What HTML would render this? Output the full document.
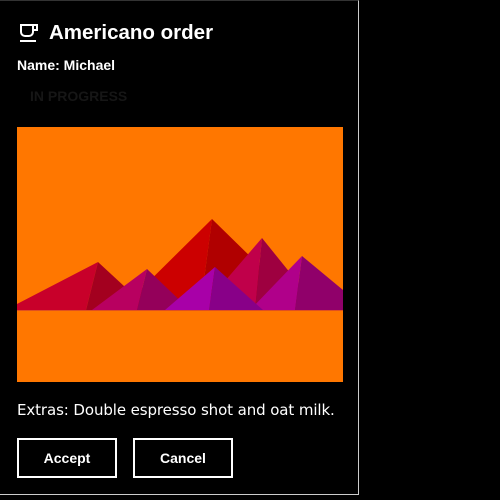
<!DOCTYPE html>
<html><head><style>
body{margin:0;background:#000;width:500px;height:500px;overflow:hidden;font-family:"DejaVu Sans","Liberation Sans",sans-serif;color:#fff}
.card{position:absolute;left:0;top:0;width:358px;height:493px;border:1px solid #ccc;border-left:none;border-top:1px solid #333}
h1{position:absolute;left:49px;top:21px;margin:0;font-size:20.5px;font-weight:bold;font-family:"Liberation Sans",sans-serif}
.name{position:absolute;left:17px;top:57px;font-size:14px;font-weight:bold;font-family:"Liberation Sans",sans-serif}
.st{position:absolute;left:30px;top:88px;font-size:14px;font-weight:bold;color:#161616;font-family:"Liberation Sans",sans-serif}
.img{position:absolute;left:17px;top:127px}
.ex{position:absolute;left:17px;top:401px;font-size:15px;letter-spacing:-0.1px}
.btn{position:absolute;top:438px;width:100px;height:40px;border:2px solid #fff;box-sizing:border-box;font-size:14px;font-weight:bold;text-align:center;line-height:36px;font-family:"Liberation Sans",sans-serif}
</style></head><body>
<div class="card"></div>
<svg style="position:absolute;left:19px;top:23px" width="22" height="20" viewBox="0 0 22 20" fill="none" stroke="#fff" stroke-width="2"><path d="M2 2h12v7a4 4 0 0 1-4 4H6a4 4 0 0 1-4-4z"/><path d="M14 2h4v5h-4"/><path d="M1 18h16"/></svg>
<h1>Americano order</h1>
<div class="name">Name: Michael</div>
<div class="st">IN PROGRESS</div>
<svg class="img" width="326" height="255" viewBox="17 127 326 255">
<rect x="17" y="127" width="326" height="255" fill="#ff7700"/>
<polygon points="17,304 98,262 86,310 17,310" fill="#c8002a"/><polygon points="98,262 150,310 86,310" fill="#a3001f"/>
<polygon points="120,310 212,219 200,310" fill="#cc0000"/><polygon points="212,219 305,310 200,310" fill="#b00000"/>
<polygon points="200,310 262,238 255,310" fill="#c0004a"/><polygon points="262,238 320,310 255,310" fill="#9e0040"/>
<polygon points="92,310 147,269 137,310" fill="#b80060"/><polygon points="147,269 190,310 137,310" fill="#94005a"/>
<polygon points="250,310 302,256 295,310" fill="#b0008a"/><polygon points="302,256 343,290 343,310 295,310" fill="#90006a"/>
<polygon points="165,310 215,267 209,310" fill="#a800a8"/><polygon points="215,267 263,310 209,310" fill="#880088"/>
<rect x="17" y="310" width="326" height="1" fill="#e05020"/>
</svg>
<div class="ex">Extras: Double espresso shot and oat milk.</div>
<div class="btn" style="left:17px">Accept</div>
<div class="btn" style="left:133px">Cancel</div>
</body></html>
